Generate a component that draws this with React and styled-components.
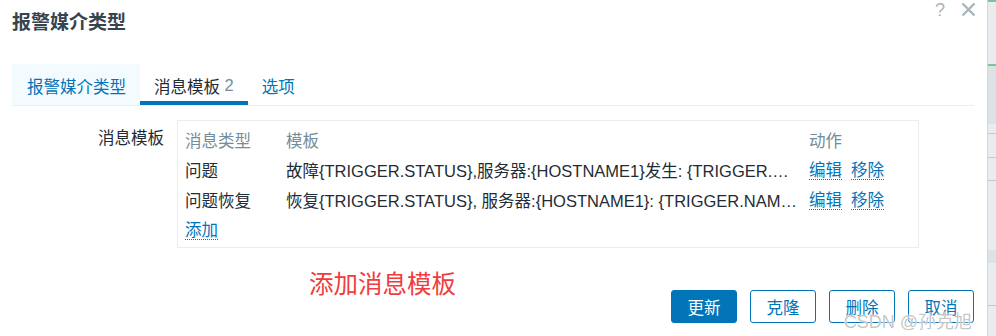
import React from 'react'
import styled, { createGlobalStyle } from 'styled-components'

const GlobalStyle = createGlobalStyle`
  html, body {
    margin: 0;
    padding: 0;
    background: #ffffff;
  }
  body {
    font-family: Arial, "Liberation Sans", "Noto Sans CJK SC", sans-serif;
    color: #1f2c33;
  }
`

const rows = [
    { type: '问题', tpl: '故障{TRIGGER.STATUS},服务器:{HOSTNAME1}发生: {TRIGGER.NAME}故障!' },
    { type: '问题恢复', tpl: '恢复{TRIGGER.STATUS}, 服务器:{HOSTNAME1}: {TRIGGER.NAME}已恢复!' },
]

function App() {
    return (
        <Page>
            <GlobalStyle />
            <Dialog>
                <Header>
                    <Title>报警媒介类型</Title>
                    <HeadIcons>
                        <HelpMark>?</HelpMark>
                        <svg width="15" height="15" viewBox="0 0 15 15">
                            <path d="M1.5 1.5 L13.5 13.5 M13.5 1.5 L1.5 13.5" stroke="#aab4bc" strokeWidth="2.4" fill="none" />
                        </svg>
                    </HeadIcons>
                </Header>
                <Tabs>
                    <Tab $soft>报警媒介类型</Tab>
                    <Tab $active>消息模板 <Count>2</Count></Tab>
                    <Tab>选项</Tab>
                </Tabs>
                <FormRow>
                    <Label>消息模板</Label>
                    <TableBox>
                        <Grid>
                            <Head>消息类型</Head>
                            <Head>模板</Head>
                            <Head>动作</Head>
                            {rows.map((r) => (
                                <React.Fragment key={r.type}>
                                    <Cell>{r.type}</Cell>
                                    <Cell $clip>{r.tpl}</Cell>
                                    <Cell>
                                        <Actions>
                                            <LinkText>编辑</LinkText>
                                            <LinkText>移除</LinkText>
                                        </Actions>
                                    </Cell>
                                </React.Fragment>
                            ))}
                            <Cell><LinkText>添加</LinkText></Cell>
                        </Grid>
                    </TableBox>
                </FormRow>
                <Footer>
                    <Note>添加消息模板</Note>
                    <Button $primary>更新</Button>
                    <Button>克隆</Button>
                    <Button>删除</Button>
                    <Button>取消</Button>
                    <Watermark>CSDN @孙克旭</Watermark>
                </Footer>
            </Dialog>
            <SideStrip>
                <StripMark $top={0} $h={2} $c="#7cc496" />
                <StripMark $top={64} $h={60} $c="#dde2e6" />
                <StripMark $top={64} $h={2} $c="#7cc496" />
                <StripMark $top={133} $h={1} $c="#c3c9ce" />
                <StripMark $top={157} $h={1} $c="#c3c9ce" />
                <StripMark $top={180} $h={1} $c="#c3c9ce" />
                <StripMark $top={250} $h={13} $c="#dde2e6" />
                <StripMark $top={305} $h={1} $c="#c3c9ce" />
            </SideStrip>
        </Page>
    )
}

export default App

const Page = styled.div`
  display: flex;
  width: 996px;
  height: 336px;
  overflow: hidden;
`

const Dialog = styled.div`
  position: relative;
  flex: 1;
  padding: 0 13px 0 12px;
  box-sizing: border-box;
`

const Header = styled.div`
  display: flex;
  justify-content: space-between;
  height: 64px;
`

const Title = styled.h2`
  margin: 10px 0 0;
  font-size: 19px;
  font-weight: bold;
  line-height: 26px;
  color: #37434d;
`

const HeadIcons = styled.div`
  display: flex;
  align-items: flex-start;
  gap: 16px;
  padding-top: 2px;
  margin-right: -2px;
`

const HelpMark = styled.span`
  font-size: 18px;
  line-height: 16px;
  color: #aab4bc;
`

const Tabs = styled.div`
  display: flex;
  height: 41px;
  border-bottom: 1px solid #ebeef0;
`

const Tab = styled.div`
  display: flex;
  align-items: center;
  padding: 2px 14px 0 ${(p) => (p.$soft ? '15px' : '14px')};
  font-size: 16.5px;
  color: ${(p) => (p.$active ? '#1f2c33' : '#0275b8')};
  background: ${(p) => (p.$soft ? '#f4fbff' : 'transparent')};
  box-shadow: ${(p) => (p.$active ? 'inset 0 -4px 0 #0275b8' : 'none')};
  box-sizing: border-box;
  white-space: pre;
`

const Count = styled.span`
  color: #768d99;
`

const FormRow = styled.div`
  display: flex;
  align-items: flex-start;
  margin-top: 14px;
  margin-right: 55px;
`

const Label = styled.div`
  width: 165px;
  padding-right: 13px;
  padding-top: 8px;
  box-sizing: border-box;
  text-align: right;
  font-size: 16.5px;
  line-height: 20px;
  color: #1f2c33;
`

const TableBox = styled.div`
  flex: 1;
  border: 1px solid #ebeef0;
  padding: 4px 8px 2px 7px;
`

const Grid = styled.div`
  display: grid;
  grid-template-columns: 101px 523px 1fr;
  grid-auto-rows: 30px;
  align-items: center;
  font-size: 16.5px;
`

const Head = styled.div`
  color: #768d99;
`

const Cell = styled.div`
  min-width: 0;
  color: #1f2c33;
  white-space: nowrap;
  overflow: ${(p) => (p.$clip ? 'hidden' : 'visible')};
  text-overflow: ellipsis;
  padding-right: ${(p) => (p.$clip ? '10px' : '0')};
`

const Actions = styled.div`
  display: flex;
  gap: 9px;
`

const LinkText = styled.span`
  color: #0275b8;
  border-bottom: 1px dotted #0275b8;
  line-height: 18px;
  cursor: pointer;
`

const Footer = styled.div`
  position: relative;
  display: flex;
  justify-content: flex-end;
  gap: 13px;
  margin-top: 42px;
`

const Button = styled.button`
  width: 66px;
  height: 33px;
  border: 1px solid #0275b8;
  border-radius: 3px;
  background: ${(p) => (p.$primary ? '#0275b8' : '#ffffff')};
  color: ${(p) => (p.$primary ? '#ffffff' : '#0275b8')};
  font-family: inherit;
  font-size: 16.5px;
  padding: 0;
`

const Note = styled.span`
  position: absolute;
  left: 297px;
  top: -25px;
  font-size: 24.5px;
  color: #f03c3c;
`

const Watermark = styled.span`
  position: absolute;
  right: 2px;
  top: 17px;
  font-size: 18px;
  color: rgba(150, 150, 150, 0.55);
  text-shadow: 0 0 1px #ffffff, 0 0 2px #ffffff;
  pointer-events: none;
`

const SideStrip = styled.div`
  position: relative;
  width: 8px;
  background: #e9ecef;
  border-left: 1px solid #d3d8dc;
`

const StripMark = styled.div`
  position: absolute;
  left: 0;
  right: 0;
  top: ${(p) => p.$top}px;
  height: ${(p) => p.$h}px;
  background: ${(p) => p.$c};
`
